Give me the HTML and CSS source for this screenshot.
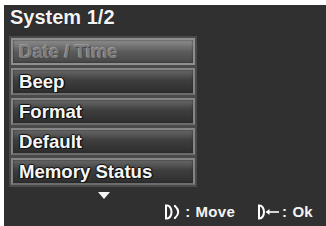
FILE: index.html
```html
<!DOCTYPE html>
<html lang="en">
<head>
    <meta charset="UTF-8">
    <title>System 1/2</title>
    <link rel="stylesheet" href="styles.css">
</head>
<body>
    <div class="screen">
        <h1 class="title">System 1/2</h1>

        <div class="menu">
            <div class="item selected"><span class="dim">Date / Time</span></div>
            <div class="item"><span>Beep</span></div>
            <div class="item"><span>Format</span></div>
            <div class="item"><span>Default</span></div>
            <div class="item"><span>Memory Status</span></div>
        </div>

        <div class="more"><i class="arrow-down"></i></div>

        <div class="hints">
            <div class="hint move">
                <svg width="18" height="16" viewBox="0 0 18 16">
                    <path d="M2 1.5 V14.5 M1 1.5 H3 A4.5 6.5 0 0 1 3 14.5 H1" fill="none" stroke="#fff" stroke-width="2"/>
                    <path d="M10 2 H11 Q17.5 8 11 14 H10" fill="none" stroke="#fff" stroke-width="2"/>
                </svg>
                <span class="colon">:</span><span>Move</span>
            </div>
            <div class="hint">
                <svg width="22" height="16" viewBox="0 0 22 16">
                    <path d="M2 1.5 V14.5 M1 1.5 H2.5 A4.5 6.5 0 0 1 2.5 14.5 H1" fill="none" stroke="#fff" stroke-width="2"/>
                    <path d="M12 8 H22" stroke="#fff" stroke-width="1.6"/>
                    <path d="M8.5 8 L12.5 5 V11 Z" fill="#fff"/>
                </svg>
                <span class="colon">:</span><span>Ok</span>
            </div>
        </div>
    </div>
</body>
</html>
```

FILE: styles.css
```css
body {
    margin: 0;
    padding: 5px 0 0 4px;
    background-color: white;
    font-family: "Liberation Sans", Arial, sans-serif;
}

.screen {
    width: 322px;
    height: 221px;
    box-sizing: border-box;
    background-color: #303030;
    padding: 1px 0 0 5px;
}

.title {
    margin: 0;
    font-size: 20px;
    line-height: 22px;
    font-weight: bold;
    color: #f4f4f4;
    padding-left: 1px;
    text-shadow: 0 0 1px #000;
}

.menu {
    width: 188px;
    margin-top: 8px;
    box-sizing: border-box;
    padding: 2px;
    background-color: #4a4a4a;
    display: flex;
    flex-direction: column;
    gap: 3px;
}

.item {
    height: 27px;
    box-sizing: border-box;
    border: 2px solid #858585;
    border-bottom-color: #6c6c6c;
    background: linear-gradient(#686868, #3e3e3e 45%, #2e2e2e);
    box-shadow: inset 0 0 2px #222;
    padding-left: 6px;
}

.item.selected {
    border-color: #8e8e8e;
    background: linear-gradient(#8e8e8e, #5c5c5c 50%, #474747);
}

.item span {
    display: block;
    font-size: 18.6px;
    line-height: 23px;
    font-weight: bold;
    color: #f6f6f6;
    text-shadow: 1px 1px 0 #111, -1px 0 1px #111, 0 -1px 1px #111, 1px 0 1px #000;
}

.item span.dim {
    color: #7c7c7c;
    text-shadow: 1px 1px 0 #4a4a4a, -1px -1px 0 #9a9a9a;
}

.more {
    height: 7px;
    margin-top: 5px;
    padding-left: 89px;
}

.arrow-down {
    display: block;
    width: 0;
    height: 0;
    border-left: 6px solid transparent;
    border-right: 6px solid transparent;
    border-top: 7px solid #f4f4f4;
}

.hints {
    margin-top: 4px;
    display: flex;
    justify-content: flex-end;
    gap: 22px;
    padding-right: 13px;
}

.hint {
    display: flex;
    align-items: center;
    color: #f4f4f4;
    font-size: 15px;
    font-weight: bold;
    letter-spacing: 0.3px;
}

.hint svg {
    display: block;
}

.hint .colon {
    margin: 0 5px 0 3px;
}
```
